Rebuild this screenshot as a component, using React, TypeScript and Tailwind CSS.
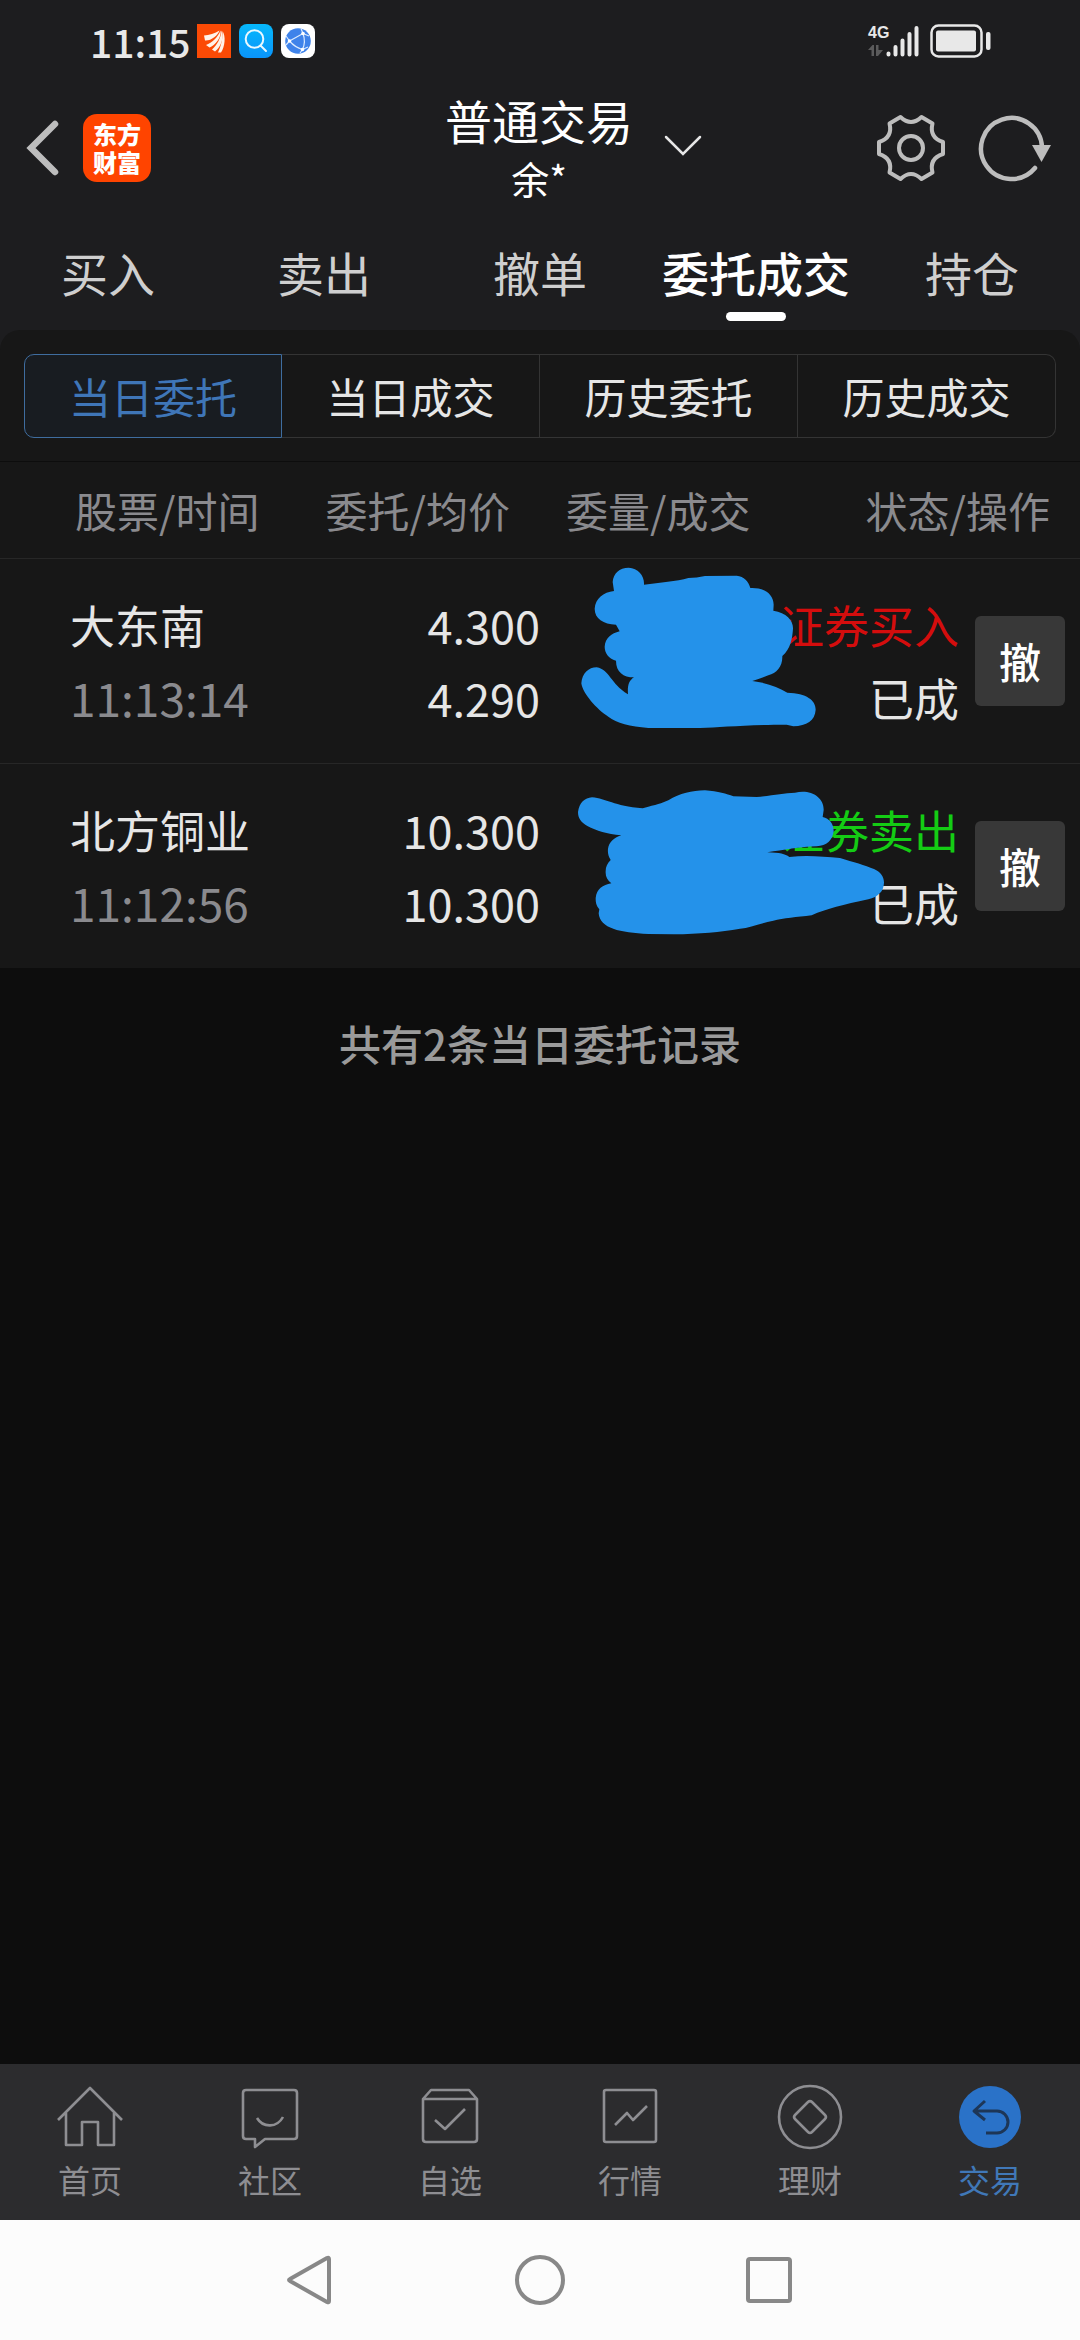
import type { ReactNode } from 'react';

const tabs = ['买入', '卖出', '撤单', '委托成交', '持仓'];
const segments = ['当日委托', '当日成交', '历史委托', '历史成交'];

const orders = [
  {
    name: '大东南',
    time: '11:13:14',
    price: '4.300',
    avg: '4.290',
    side: '证券买入',
    sideColor: 'text-[#d40d0d]',
    state: '已成',
    maskBox: '0 27 990 615',
    mask: 'M252 104 C300 98 350 94 385 84 Q410 84 435 78 L530 77 C552 79 566 94 571 114 C610 112 640 130 641 164 L640 182 C680 188 700 212 699 236 C697 264 692 296 667 318 C668 350 650 370 625 376 Q600 386 577 393 C620 398 655 412 682 428 C740 430 767 450 767 479 C765 512 740 527 700 529 L680 524 C560 524 480 532 420 534 L265 534 C210 528 170 520 145 500 C110 478 68 430 64 400 C66 370 86 352 110 352 C150 360 150 400 204 433 C202 408 206 392 222 382 C190 382 168 366 168 332 C145 325 134 308 134 290 C136 264 154 250 179 244 L168 224 C130 222 104 206 104 176 C106 146 130 126 162 123 L158 96 C160 70 178 53 206 53 C235 54 254 78 252 104 Z',
  },
  {
    name: '北方铜业',
    time: '11:12:56',
    price: '10.300',
    avg: '10.300',
    side: '证券卖出',
    sideColor: 'text-[#14cc14]',
    state: '已成',
    maskBox: '0 642 990 615',
    mask: 'M96 742 C140 746 160 768 248 775 C290 764 305 760 325 751 C360 730 395 722 435 721 C475 724 500 732 520 739 L590 741 C640 736 670 730 705 728 C750 716 792 740 791 780 L788 801 C808 806 821 820 821 844 C818 870 800 888 770 889 C720 890 670 900 622 907 C660 908 675 912 688 921 C740 914 790 920 840 924 C880 936 915 946 942 957 C962 966 972 980 972 998 C971 1024 955 1040 925 1048 C850 1064 800 1076 755 1096 C710 1102 670 1104 640 1112 C600 1120 570 1134 540 1136 C480 1146 420 1152 340 1153 L265 1152 C180 1148 120 1136 116 1090 L118 1078 C108 1066 107 1056 107 1044 C110 1016 128 1006 154 1000 C142 990 136 980 137 964 C137 950 142 940 152 930 C144 916 143 908 144 896 C148 876 160 864 184 856 C140 852 110 842 82 828 C62 816 54 804 54 786 C58 758 74 744 96 742 Z',
  },
];

function StatusBar() {
  return (
    <div className="flex h-[82px] items-center justify-between pl-[90px] pr-[88px]">
      <div className="flex items-center gap-2">
        <span className="w-[99px] text-[39px] font-medium leading-[48px] text-[#e8e8e8]">11:15</span>
        <svg width="34" height="34" viewBox="0 0 34 34">
          <rect width="34" height="34" fill="#fb4a05" />
          <g fill="#fff3ea">
            <path d="M7 11.500 C12 11 18 9.500 22.500 6.500 C21 11.500 14 17 8 16.500 Z" />
            <path d="M9 21 C15 19 21 13 23.500 6.500 C25 13 18 21.500 12.500 23.500 Z" />
            <path d="M15 25.500 C20 21 24 14 24.500 6.500 C27.500 13 24 23 18 27.500 Z" />
            <path d="M21 28.500 C24 22 26 14 25.500 7 C29 12 28 23 24 28.500 Z" />
          </g>
        </svg>
        <svg width="34" height="34" viewBox="0 0 34 34">
          <defs>
            <linearGradient id="search-bg" x1="0" y1="0" x2="0" y2="1">
              <stop offset="0" stopColor="#06b8fb" />
              <stop offset="1" stopColor="#0a94fb" />
            </linearGradient>
          </defs>
          <rect width="34" height="34" rx="8" fill="url(#search-bg)" />
          <g fill="none" stroke="#e9f8ff" strokeWidth="2">
            <circle cx="15.500" cy="15" r="8.800" />
            <path d="M21.500 21.500 L27 27" strokeLinecap="round" />
          </g>
        </svg>
        <svg width="34" height="34" viewBox="0 0 34 34">
          <rect width="34" height="34" rx="8" fill="#fff" />
          <circle cx="17" cy="17" r="12.800" fill="#3f83ea" />
          <g fill="none" stroke="#dcebff" strokeWidth="1.200">
            <path d="M8.500 17 L22 9.500 M8.500 17 C12 21 16 24 21.500 25.500 M22 9.500 C24 15 24 20 21.500 25.500" />
            <path d="M8.500 17 L5 12 M8.500 17 L5 21 M22 9.500 L20 4.500 M22 9.500 L28 12 M21.500 25.500 L27 23 M21.500 25.500 L19 29" />
          </g>
          <g fill="#fff">
            <circle cx="8.500" cy="17" r="1.800" />
            <circle cx="22" cy="9.500" r="1.800" />
            <circle cx="21.500" cy="25.500" r="1.800" />
          </g>
        </svg>
      </div>
      <div className="flex items-center">
        <div className="flex w-[18px] flex-col">
          <span className="font-['Liberation_Sans',sans-serif] text-base font-bold leading-4 text-[#e8e8e8]">4G</span>
          <svg width="16" height="12" viewBox="0 0 16 12" className="mt-1" fill="#5b5b5c">
            <path d="M0 5 L4.500 0 H6 V11 H3.500 V5 Z M8 0 H10.500 V5 H15 L10 11 H8 Z" />
          </svg>
        </div>
        <svg width="34" height="32" viewBox="0 0 34 32" stroke="#e8e8e8" strokeWidth="4" strokeLinecap="round">
          <path d="M2.500 28.500 V29.500 M9.500 22 V29.500 M16.500 15.500 V29.500 M23.500 9 V29.500 M30.500 3 V29.500" />
        </svg>
        <svg width="62" height="34" viewBox="0 0 62 34" className="ml-[10px]">
          <rect x="1.500" y="1.500" width="50" height="31" rx="7" fill="none" stroke="#e8e8e8" strokeWidth="2.500" />
          <rect x="6" y="6.500" width="40" height="21" rx="2" fill="#e8e8e8" />
          <rect x="56" y="8" width="4.500" height="18" rx="2" fill="#e8e8e8" />
        </svg>
      </div>
    </div>
  );
}

function Header() {
  return (
    <div className="grid h-[132px] grid-cols-[1fr_auto_1fr] items-center pl-[26px] pr-7">
      <div className="flex items-center gap-6">
        <button type="button" aria-label="返回">
          <svg width="33" height="58" viewBox="0 0 33 58" fill="none" stroke="#bdbdbd" strokeWidth="6.500" strokeLinecap="round">
            <path d="M29 5 L5 29 L29 53" />
          </svg>
        </button>
        <div className="flex size-[68px] flex-col items-center justify-center rounded-[14px] bg-[#ff4400] text-2xl font-black leading-7 text-white">
          <span>东方</span>
          <span>财富</span>
        </div>
      </div>
      <button type="button" className="relative text-white">
        <span className="block text-[47px] leading-[60px]">普通交易</span>
        <span className="block text-[38px] leading-[56px]">余*</span>
        <svg width="40" height="24" viewBox="0 0 40 24" className="absolute -right-[70px] top-[44px]" fill="none" stroke="#e6e6e6" strokeWidth="2.500" strokeLinecap="round">
          <path d="M3 3 L20 20 L37 3" />
        </svg>
      </button>
      <div className="flex items-center justify-end gap-8">
        <button type="button" aria-label="设置">
          <svg width="70" height="70" viewBox="-35 -35 70 70" fill="none" stroke="#bdbdbd" strokeWidth="4" strokeLinejoin="round">
            <path d="M-10.500 -31 Q0 -21 10.500 -31 L21.500 -24.500 Q18 -10.500 32 -6 L32 6 Q18 10.500 21.500 24.500 L10.500 31 Q0 21 -10.500 31 L-21.500 24.500 Q-18 10.500 -32 6 L-32 -6 Q-18 -10.500 -21.500 -24.500 Z" />
            <circle r="12" />
          </svg>
        </button>
        <button type="button" aria-label="刷新">
          <svg width="74" height="70" viewBox="0 0 74 70" fill="none" stroke="#bdbdbd" strokeWidth="4.500">
            <path d="M57 55 A30.500 30.500 0 1 1 64 34" strokeLinecap="round" />
            <path d="M54 32 H73 L63.500 49 Z" fill="#bdbdbd" stroke="none" />
          </svg>
        </button>
      </div>
    </div>
  );
}

function NavIcon({ children }: { children: ReactNode }) {
  return (
    <svg width="68" height="68" viewBox="-34 -34 68 68" fill="none" stroke="currentColor" strokeWidth="2.600" strokeLinejoin="round">
      {children}
    </svg>
  );
}

const navItems = [
  {
    label: '首页',
    icon: <path d="M-32 3 L0 -29 L32 3 M-24 -4 V28 H-8 V5 H8 V28 H24 V-4" />,
  },
  {
    label: '社区',
    icon: (
      <path d="M-24 -27 H24 Q27 -27 27 -24 V19 Q27 22 24 22 H-5 L-15 30 V22 H-24 Q-27 22 -27 19 V-24 Q-27 -27 -24 -27 Z M-13 1 C-7 11 7 11 13 0" />
    ),
  },
  {
    label: '自选',
    icon: (
      <path d="M-27 -18 L-19 -27 H19 L27 -18 V22 Q27 25 24 25 H-24 Q-27 25 -27 22 V-18 H27 M-15 3 L-5 12 L15 -8" />
    ),
  },
  {
    label: '行情',
    icon: (
      <>
        <rect x="-26" y="-27" width="52" height="52" rx="2" />
        <path d="M-15 8 L-3 -4 L3 3 L17 -11" />
      </>
    ),
  },
  {
    label: '理财',
    icon: (
      <>
        <circle r="31" />
        <path d="M-2 -15 Q0 -17 2 -15 L15 -2 Q17 0 15 2 L2 15 Q0 17 -2 15 L-15 2 Q-17 0 -15 -2 Z" />
      </>
    ),
  },
  {
    label: '交易',
    active: true,
    icon: (
      <>
        <circle r="31" fill="#2a72c8" stroke="none" />
        <path d="M-5 -16 L-16 -6 L-5 3 M-16 -6 H7 A11 11 0 0 1 7 16 H-4" stroke="#1d3657" strokeWidth="3" />
      </>
    ),
  },
];

function BottomNav() {
  return (
    <nav className="grid h-[156px] grid-cols-6 bg-[#2c2c2e] pt-[19px]">
      {navItems.map((item) => (
        <a key={item.label} href="#" className={`flex flex-col items-center ${item.active ? 'text-[#4078b8]' : 'text-[#8e8e92]'}`}>
          <NavIcon>{item.icon}</NavIcon>
          <span className="mt-2 text-[32px] leading-10">{item.label}</span>
        </a>
      ))}
    </nav>
  );
}

function SystemNav() {
  return (
    <div className="flex h-[120px] items-center justify-center gap-[170px] bg-[#fcfcfc]">
      <button type="button" aria-label="后退">
        <svg width="60" height="60" viewBox="0 0 60 60" fill="none" stroke="#888" strokeWidth="4" strokeLinejoin="round">
          <path d="M47 8 Q49 7 49 9 V51 Q49 53 47 52 L10 31 Q8 30 10 29 Z" />
        </svg>
      </button>
      <button type="button" aria-label="主屏幕">
        <svg width="60" height="60" viewBox="0 0 60 60" fill="none" stroke="#888" strokeWidth="4">
          <circle cx="30" cy="30" r="23" />
        </svg>
      </button>
      <button type="button" aria-label="最近任务">
        <svg width="60" height="60" viewBox="0 0 60 60" fill="none" stroke="#888" strokeWidth="4">
          <rect x="8" y="9" width="42" height="42" rx="2" />
        </svg>
      </button>
    </div>
  );
}

export default function App() {
  return (
    <div className="flex min-h-screen flex-col bg-[#0d0d0d] font-['Noto_Sans_CJK_SC',sans-serif]">
      <header className="bg-[#1d1d1f]">
        <StatusBar />
        <Header />
        <nav className="grid h-[116px] grid-cols-5 pt-5">
          {tabs.map((tab) => (
            <a key={tab} href="#" className="flex flex-col items-center">
              <span className={`whitespace-nowrap text-[47px] leading-[76px] ${tab === '委托成交' ? 'font-medium text-white' : 'text-[#cfcfcf]'}`}>
                {tab}
              </span>
              {tab === '委托成交' && <span className="mt-0.5 h-[9px] w-[60px] rounded-full bg-white" />}
            </a>
          ))}
        </nav>
      </header>

      <main className="flex-1">
        <section className="bg-[#1d1d1f]">
          <div className="rounded-t-[20px] border-b border-[#0d0d0d] bg-[#171717] px-6 pb-[23px] pt-6">
            <div className="grid grid-cols-4 text-[42px] leading-[82px] text-[#e6e6e6]">
              {segments.map((label, i) => (
                <button
                  key={label}
                  type="button"
                  className={
                    i === 0
                      ? 'rounded-l-[10px] border border-[#3f6d9f] bg-[#181c21] text-[#3f76b8]'
                      : 'border-y border-r border-[#343434] last:rounded-r-[10px]'
                  }
                >
                  {label}
                </button>
              ))}
            </div>
          </div>
        </section>

        <table className="w-full table-fixed border-collapse bg-[#171717]">
          <colgroup>
            <col className="w-[25%]" />
            <col className="w-[25%]" />
            <col className="w-[22%]" />
            <col />
            <col className="w-[121px]" />
          </colgroup>
          <thead>
            <tr className="h-[96px] whitespace-nowrap border-b border-[#272727] text-[42px] leading-[60px] text-[#8a8a8e]">
              <th className="pl-[75px] text-left font-normal">股票/时间</th>
              <th className="pr-[30px] text-right font-normal">委托/均价</th>
              <th className="pl-[26px] text-left font-normal">委量/成交</th>
              <th colSpan={2} className="pr-[30px] text-right font-normal">状态/操作</th>
            </tr>
          </thead>
          <tbody>
            {orders.map((order) => (
              <tr key={order.name} className="h-[205px] whitespace-nowrap border-b border-[#272727] text-[45px] leading-[73px] text-[#e6e6e6] last:border-b-0">
                <td className="pl-[70px]">
                  <div>{order.name}</div>
                  <div className="text-[46px] text-[#8a8a8e]">{order.time}</div>
                </td>
                <td className="text-right">
                  <div>{order.price}</div>
                  <div>{order.avg}</div>
                </td>
                <td className="relative">
                  <svg width="330" height="205" viewBox={order.maskBox} className="absolute left-5 top-0 max-w-none" fill="#2492ea">
                    <path d={order.mask} />
                  </svg>
                </td>
                <td className="text-right">
                  <div className={`flex justify-end ${order.sideColor}`}>{order.side}</div>
                  <div>{order.state}</div>
                </td>
                <td className="pl-4">
                  <button type="button" className="block size-[90px] rounded-md bg-[#383838] text-[42px] font-medium leading-[90px] text-white">
                    撤
                  </button>
                </td>
              </tr>
            ))}
          </tbody>
        </table>

        <p className="pt-[45px] text-center text-[42px] font-medium leading-[60px] text-[#9a9a9a]">共有2条当日委托记录</p>
      </main>

      <BottomNav />
      <SystemNav />
    </div>
  );
}
